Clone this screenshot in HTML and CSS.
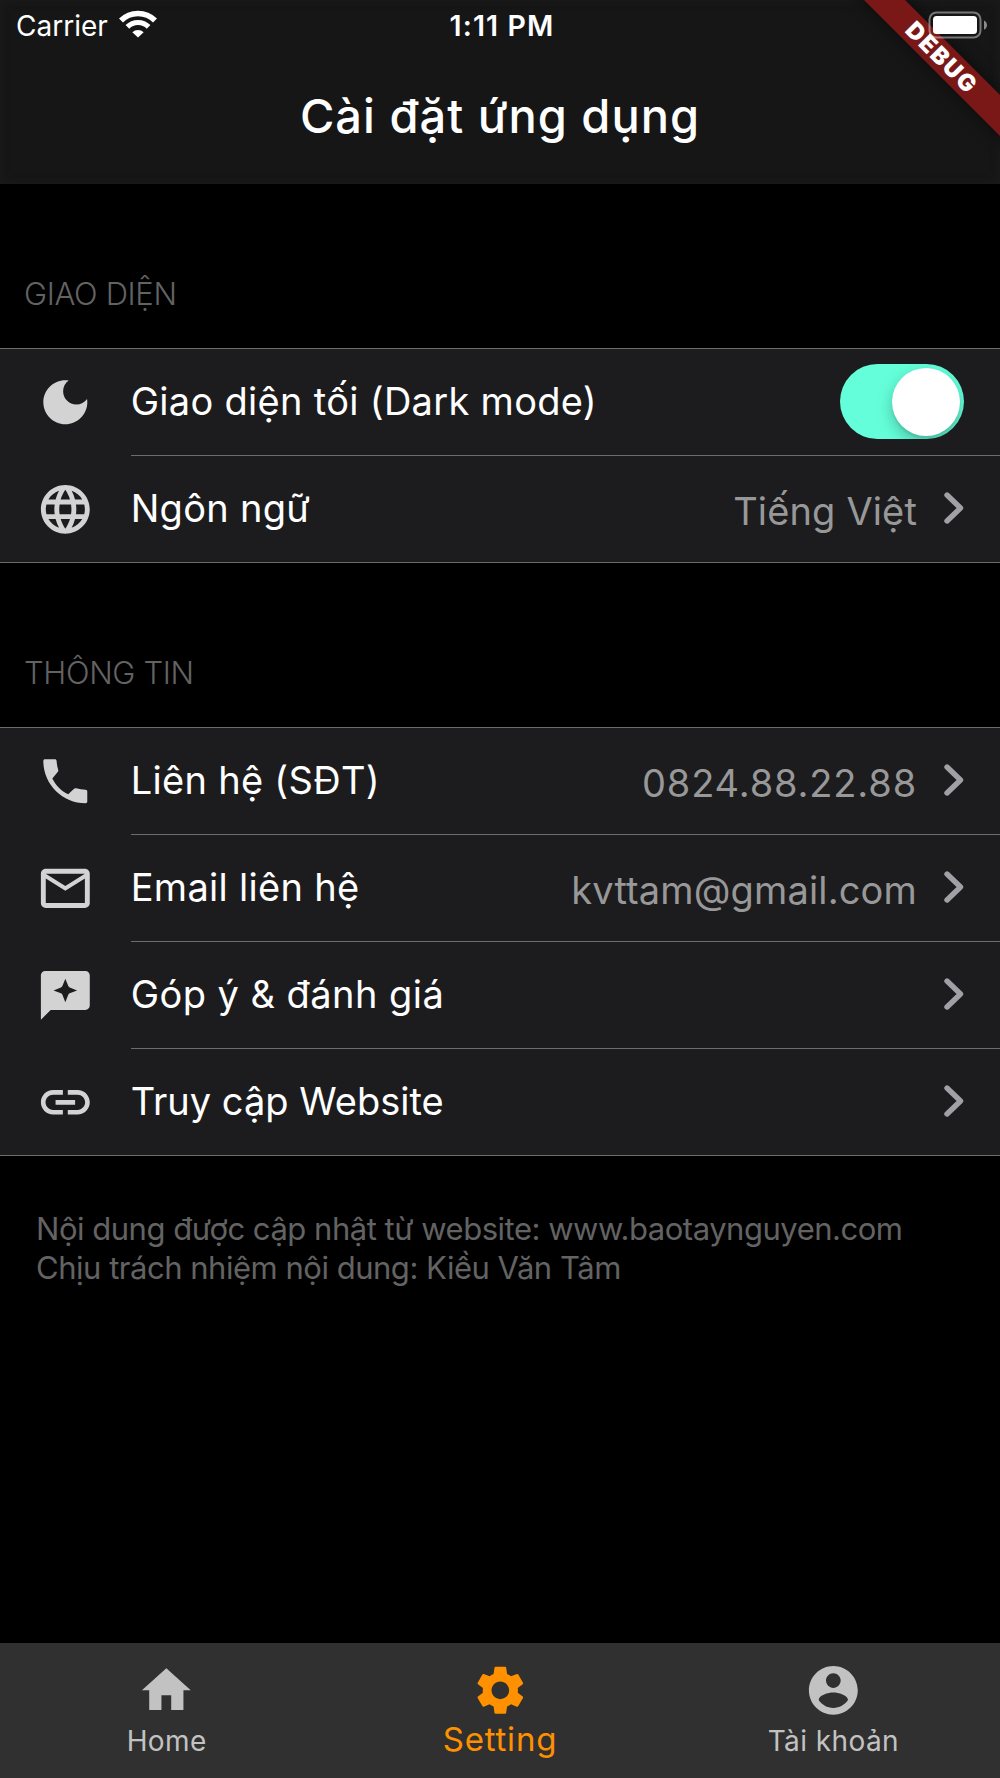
FILE: index.html
```html
<!DOCTYPE html>
<html lang="vi">
<head>
    <meta charset="UTF-8">
    <meta name="viewport" content="width=device-width, initial-scale=1.0">
    <title>Cài đặt ứng dụng</title>
    <link rel="stylesheet" href="styles.css">
</head>
<body>
    <div class="app">
        <header class="header">
            <div class="status-bar">
                <div class="status-left">
                    <span class="carrier">Carrier</span>
                    <svg class="wifi" viewBox="0 0 38 28">
                        <path d="M2 10.5a24 24 0 0 1 34 0" fill="none" stroke="#fff" stroke-width="5.6"/>
                        <path d="M8.4 16.9a15 15 0 0 1 21.2 0" fill="none" stroke="#fff" stroke-width="5.2"/>
                        <path d="M19 27.5l-5.7-5.3a8.2 8.2 0 0 1 11.4 0z" fill="#fff"/>
                    </svg>
                </div>
                <span class="time">1:11 PM</span>
                <div class="status-right">
                    <svg class="battery" viewBox="0 0 60 28">
                        <rect x="1.5" y="1.5" width="51" height="25" rx="7" fill="none" stroke="#fff" stroke-opacity=".42" stroke-width="2"/>
                        <rect x="5" y="5" width="44" height="18" rx="3.5" fill="#fff"/>
                        <path d="M56 9.5c4 1.6 4 7.6 0 9.2z" fill="#fff" fill-opacity=".5"/>
                    </svg>
                </div>
            </div>
            <h1 class="title">Cài đặt ứng dụng</h1>
            <div class="debug-corner">
                <div class="debug-banner">DEBUG</div>
            </div>
        </header>

        <main class="content">
            <h2 class="section-title">GIAO DIỆN</h2>
            <div class="list">
                <div class="row">
                    <svg class="icon" viewBox="0 0 24 24"><path d="M12 3c-4.97 0-9 4.03-9 9s4.03 9 9 9 9-4.03 9-9c0-.46-.04-.92-.1-1.36-.98 1.37-2.58 2.26-4.4 2.26-2.98 0-5.4-2.42-5.4-5.4 0-1.81.89-3.42 2.26-4.4-.44-.06-.9-.1-1.36-.1z"/></svg>
                    <div class="row-body">
                        <span class="label">Giao diện tối (Dark mode)</span>
                        <div class="switch"><div class="thumb"></div></div>
                    </div>
                </div>
                <div class="row">
                    <svg class="icon" viewBox="0 0 24 24"><path d="M11.99 2C6.47 2 2 6.48 2 12s4.47 10 9.99 10C17.52 22 22 17.52 22 12S17.52 2 11.99 2zm6.93 6h-2.95c-.32-1.25-.78-2.45-1.38-3.56 1.84.63 3.37 1.91 4.33 3.56zM12 4.04c.83 1.2 1.48 2.53 1.91 3.96h-3.82c.43-1.43 1.08-2.76 1.91-3.96zM4.26 14C4.1 13.36 4 12.69 4 12s.1-1.36.26-2h3.38c-.08.66-.14 1.32-.14 2 0 .68.06 1.34.14 2H4.26zm.82 2h2.95c.32 1.25.78 2.45 1.38 3.56-1.84-.63-3.37-1.9-4.33-3.56zm2.95-8H5.08c.96-1.66 2.49-2.93 4.33-3.56C8.81 5.55 8.35 6.75 8.03 8zM12 19.96c-.83-1.2-1.48-2.53-1.91-3.96h3.82c-.43 1.43-1.08 2.76-1.91 3.96zM14.34 14H9.66c-.09-.66-.16-1.32-.16-2 0-.68.07-1.35.16-2h4.68c.09.65.16 1.32.16 2 0 .68-.07 1.34-.16 2zm.25 5.56c.6-1.11 1.06-2.31 1.38-3.56h2.95c-.96 1.65-2.49 2.93-4.33 3.56zM16.36 14c.08-.66.14-1.32.14-2 0-.68-.06-1.34-.14-2h3.38c.16.64.26 1.31.26 2s-.1 1.36-.26 2h-3.38z"/></svg>
                    <div class="row-body">
                        <span class="label">Ngôn ngữ</span>
                        <span class="value">Tiếng Việt</span>
                        <svg class="chevron" viewBox="0 0 20 34"><path d="M3 4l13.5 13L3 30"/></svg>
                    </div>
                </div>
            </div>

            <h2 class="section-title">THÔNG TIN</h2>
            <div class="list">
                <div class="row">
                    <svg class="icon" viewBox="0 0 24 24"><path d="M3 3.7c0-.45.25-.7.7-.7h4c.45 0 .7.2.73.65.08 1.25.25 2.4.65 3.6.1.35.08.65-.2.9l-2.2 2.65c1.45 2.85 3.65 5.1 6.5 6.5l2.4-2.25c.3-.25.5-.3.9-.2 1.2.4 2.5.55 3.8.6.45.02.7.25.7.7v4.15c0 .45-.25.7-.7.7C10.8 21 3 13.2 3 3.7z"/></svg>
                    <div class="row-body">
                        <span class="label">Liên hệ (SĐT)</span>
                        <span class="value phone">0824.88.22.88</span>
                        <svg class="chevron" viewBox="0 0 20 34"><path d="M3 4l13.5 13L3 30"/></svg>
                    </div>
                </div>
                <div class="row">
                    <svg class="icon" viewBox="0 0 24 24"><path d="M22 6c0-1.1-.9-2-2-2H4c-1.1 0-2 .9-2 2v12c0 1.1.9 2 2 2h16c1.1 0 2-.9 2-2V6zm-2 0l-8 5-8-5h16zm0 12H4V8l8 5 8-5v10z"/></svg>
                    <div class="row-body">
                        <span class="label">Email liên hệ</span>
                        <span class="value">kvttam@gmail.com</span>
                        <svg class="chevron" viewBox="0 0 20 34"><path d="M3 4l13.5 13L3 30"/></svg>
                    </div>
                </div>
                <div class="row">
                    <svg class="icon" viewBox="0 0 24 24"><path fill-rule="evenodd" d="M20.2 2H3.8C2.8 2 2 2.8 2 3.8V22l4-4h14.2c1 0 1.8-.8 1.8-1.8V3.8c0-1-.8-1.8-1.8-1.8zM12 5.2l1.2 3q.2.4.6.6l3 1.2-3 1.2q-.4.2-.6.6l-1.2 3-1.2-3q-.2-.4-.6-.6l-3-1.2 3-1.2q.4-.2.6-.6z"/></svg>
                    <div class="row-body">
                        <span class="label wide">Góp ý &amp; đánh giá</span>
                        <svg class="chevron" viewBox="0 0 20 34"><path d="M3 4l13.5 13L3 30"/></svg>
                    </div>
                </div>
                <div class="row">
                    <svg class="icon" viewBox="0 0 24 24"><path d="M3.9 12c0-1.71 1.39-3.1 3.1-3.1h4V7H7c-2.76 0-5 2.24-5 5s2.24 5 5 5h4v-1.9H7c-1.71 0-3.1-1.39-3.1-3.1zM8 13h8v-2H8v2zm9-6h-4v1.9h4c1.71 0 3.1 1.39 3.1 3.1s-1.39 3.1-3.1 3.1h-4V17h4c2.76 0 5-2.24 5-5s-2.24-5-5-5z"/></svg>
                    <div class="row-body">
                        <span class="label tight">Truy cập Website</span>
                        <svg class="chevron" viewBox="0 0 20 34"><path d="M3 4l13.5 13L3 30"/></svg>
                    </div>
                </div>
            </div>

            <p class="note">Nội dung được cập nhật từ website: www.baotaynguyen.com<br>Chịu trách nhiệm nội dung: Kiều Văn Tâm</p>
        </main>

        <nav class="tab-bar">
            <div class="tab">
                <svg class="tab-icon" viewBox="0 0 24 24"><path d="M10 20v-6h4v6h5v-8h3L12 3 2 12h3v8z"/></svg>
                <span>Home</span>
            </div>
            <div class="tab active">
                <svg class="tab-icon" viewBox="0 0 24 24"><path d="M19.14 12.94c.04-.3.06-.61.06-.94 0-.32-.02-.64-.07-.94l2.03-1.58c.18-.14.23-.41.12-.61l-1.92-3.32c-.12-.22-.37-.29-.59-.22l-2.39.96c-.5-.38-1.03-.7-1.62-.94l-.36-2.54c-.04-.24-.24-.41-.48-.41h-3.84c-.24 0-.43.17-.47.41l-.36 2.54c-.59.24-1.13.57-1.62.94l-2.39-.96c-.22-.08-.47 0-.59.22L2.74 8.87c-.12.21-.08.47.12.61l2.03 1.58c-.05.3-.09.63-.09.94s.02.64.07.94l-2.03 1.58c-.18.14-.23.41-.12.61l1.92 3.32c.12.22.37.29.59.22l2.39-.96c.5.38 1.03.7 1.62.94l.36 2.54c.05.24.24.41.48.41h3.84c.24 0 .44-.17.47-.41l.36-2.54c.59-.24 1.13-.56 1.62-.94l2.39.96c.22.08.47 0 .59-.22l1.92-3.32c.12-.22.07-.47-.12-.61l-2.01-1.58zM12 15.6c-1.98 0-3.6-1.62-3.6-3.6s1.62-3.6 3.6-3.6 3.6 1.62 3.6 3.6-1.62 3.6-3.6 3.6z"/></svg>
                <span>Setting</span>
            </div>
            <div class="tab">
                <svg class="tab-icon" viewBox="0 0 24 24"><path d="M12 2C6.48 2 2 6.48 2 12s4.48 10 10 10 10-4.48 10-10S17.52 2 12 2zm0 3c1.66 0 3 1.34 3 3s-1.34 3-3 3-3-1.34-3-3 1.34-3 3-3zm0 14.2c-2.5 0-4.71-1.28-6-3.22.03-1.99 4-3.08 6-3.08 1.99 0 5.97 1.09 6 3.08-1.29 1.94-3.5 3.22-6 3.22z"/></svg>
                <span>Tài khoản</span>
            </div>
        </nav>
    </div>
</body>
</html>
```
FILE: styles.css
```css
* {
    margin: 0;
    padding: 0;
    box-sizing: border-box;
}
body {
    font-family: Inter, "Noto Sans", sans-serif;
    background: #000;
    color: #fff;
}
.app {
    display: flex;
    flex-direction: column;
    width: 100%;
    height: 100vh;
    overflow: hidden;
}

/* Header */
.header {
    position: relative;
    height: 184px;
    background: #161616;
    box-shadow: inset 0 0 10px #1d1d1d;
}
.status-bar {
    position: relative;
    z-index: 2;
    display: grid;
    grid-template-columns: 1fr auto 1fr;
    align-items: center;
    height: 51px;
    padding: 1px 12px 0 16px;
    font-size: 28px;
    line-height: 34px;
}
.status-left {
    display: flex;
    align-items: center;
    gap: 11px;
}
.wifi {
    width: 38px;
    height: 28px;
    margin-bottom: 4px;
}
.time {
    font-weight: 600;
    font-size: 28.5px;
    letter-spacing: 1.1px;
}
.status-right {
    display: flex;
    justify-content: flex-end;
    padding-bottom: 2px;
}
.battery {
    width: 60px;
    height: 28px;
}
.title {
    height: 130px;
    line-height: 130px;
    text-align: center;
    font-size: 47px;
    font-weight: 500;
    letter-spacing: 1px;
}
.debug-corner {
    position: absolute;
    top: 0;
    right: 0;
    z-index: 1;
    width: 200px;
    height: 184px;
    overflow: hidden;
}
.debug-banner {
    position: absolute;
    top: 43px;
    left: -8px;
    width: 300px;
    height: 29px;
    line-height: 29px;
    text-align: center;
    font-size: 23.5px;
    font-weight: 900;
    letter-spacing: 1.7px;
    background: #7a1818;
    box-shadow: 0 0 16px rgba(0, 0, 0, 0.5);
    transform: rotate(45deg);
}

/* Settings list */
.content {
    flex: 1;
}
.section-title {
    display: flex;
    align-items: flex-end;
    height: 164px;
    padding: 0 24px 35px;
    font-size: 31px;
    font-weight: 350;
    line-height: 38px;
    letter-spacing: -0.35px;
    color: #636363;
}
.list {
    background: #1c1c1e;
    border-top: 1px solid #6c6c6d;
}
.row {
    display: flex;
    align-items: center;
    height: 107px;
}
.row:last-child {
    border-bottom: 1px solid #6c6c6d;
}
.icon {
    flex: none;
    width: 58.67px;
    height: 58.67px;
    margin: 0 36px;
    fill: #d3d3d3;
}
.row-body {
    flex: 1;
    display: flex;
    align-items: center;
    height: 107px;
    padding-right: 36px;
    border-bottom: 1px solid #6c6c6d;
}
.row:last-child .row-body {
    height: 106px;
    border-bottom: none;
}
.label {
    flex: 1;
    padding-bottom: 3px;
    font-size: 38px;
    line-height: 46px;
    letter-spacing: 0.3px;
}
.label.tight {
    letter-spacing: 0;
}
.label.wide {
    letter-spacing: 0.45px;
}
.value {
    padding-top: 3px;
    font-size: 38px;
    line-height: 46px;
    letter-spacing: 0.15px;
    color: #989899;
}
.value.phone {
    letter-spacing: 0.85px;
}
.chevron {
    width: 20px;
    height: 34px;
    margin-left: 27px;
    margin-bottom: 2px;
    fill: none;
    stroke: #a0a0a6;
    stroke-width: 5.4;
    stroke-linecap: round;
    stroke-linejoin: round;
}
.switch {
    display: flex;
    justify-content: flex-end;
    width: 124px;
    height: 75px;
    margin-bottom: 1px;
    padding: 3.5px 4px;
    border-radius: 38px;
    background: #64ffda;
    overflow: hidden;
}
.thumb {
    width: 68px;
    height: 68px;
    border-radius: 50%;
    background: #fff;
    box-shadow: 0 6px 16px rgba(0, 0, 0, 0.25), 0 3px 2px rgba(0, 0, 0, 0.08);
}
.note {
    padding: 54px 36px 0;
    font-size: 31px;
    font-weight: 370;
    line-height: 38.6px;
    letter-spacing: -0.48px;
    color: #636363;
}

/* Bottom navigation */
.tab-bar {
    display: grid;
    grid-template-columns: repeat(3, 1fr);
    height: 135px;
    padding-top: 18px;
    background: #303030;
}
.tab {
    display: flex;
    flex-direction: column;
    align-items: center;
    gap: 4px;
    font-size: 28px;
    line-height: 34px;
    letter-spacing: 0.4px;
    color: #c2c2c2;
}
.tab.active {
    font-size: 33px;
    line-height: 30px;
    letter-spacing: 0.8px;
    color: #ff9100;
}
.tab-icon {
    width: 58.67px;
    height: 58.67px;
    fill: currentColor;
}
```
